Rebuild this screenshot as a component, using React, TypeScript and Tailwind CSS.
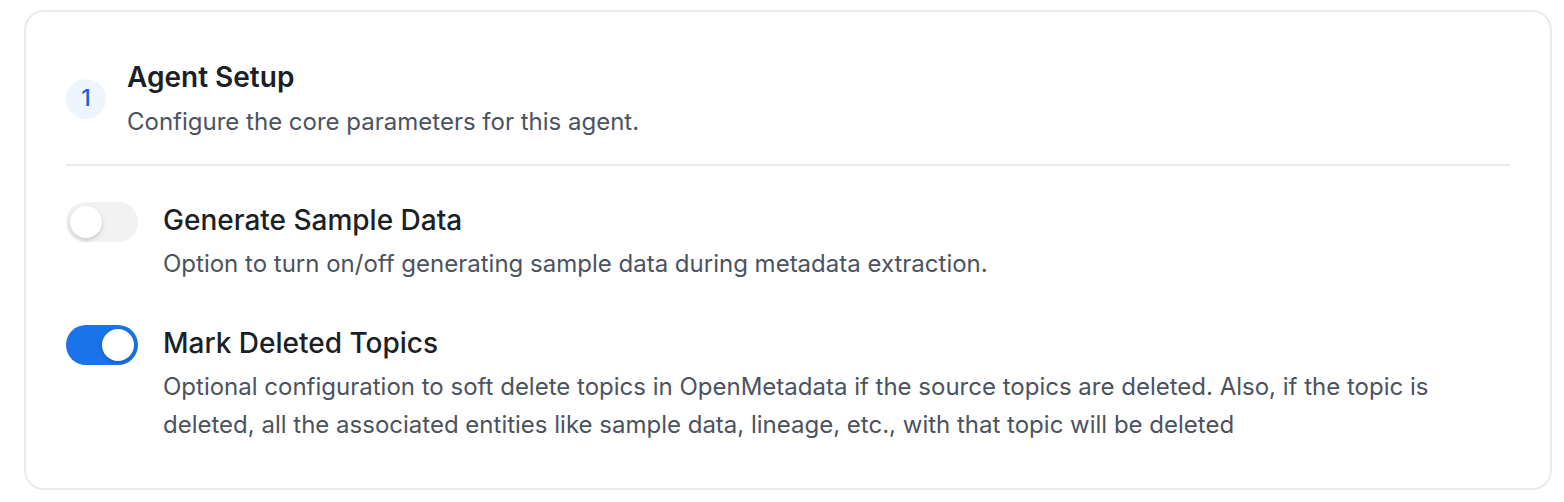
import { useState } from "react";

const FONT = { fontFamily: "Inter, 'Noto Sans', sans-serif" };

function Toggle({ on, onClick }: { on: boolean; onClick: () => void }) {
  return (
    <button
      type="button"
      onClick={onClick}
      className={
        "flex h-[40px] w-[72px] flex-none items-center rounded-full p-[4px] " +
        (on ? "justify-end bg-[#1a73e8]" : "justify-start bg-[#f2f2f2]")
      }
    >
      <span className="h-[32px] w-[32px] rounded-full bg-white shadow-[0_2px_4px_rgba(0,0,0,0.18)]" />
    </button>
  );
}

export default function App() {
  const [sample, setSample] = useState(false);
  const [mark, setMark] = useState(true);

  const rows = [
    {
      title: "Generate Sample Data",
      desc: "Option to turn on/off generating sample data during metadata extraction.",
      on: sample,
      flip: () => setSample((v) => !v),
    },
    {
      title: "Mark Deleted Topics",
      desc: "Optional configuration to soft delete topics in OpenMetadata if the source topics are deleted. Also, if the topic is deleted, all the associated entities like sample data, lineage, etc., with that topic will be deleted",
      on: mark,
      flip: () => setMark((v) => !v),
    },
  ];

  return (
    <div className="min-h-screen bg-white pl-[24px] pr-[12px] pt-[10px]" style={FONT}>
      <div className="rounded-[20px] border-2 border-[#ebebeb] bg-white px-[40px] pb-[44px] pt-[48px]">
        {/* header */}
        <div className="flex items-center gap-[21px]">
          <div className="flex h-[40px] w-[40px] flex-none items-center justify-center rounded-full bg-[#eef5fe] text-[23px] font-medium text-[#1d5fd6]">
            1
          </div>
          <div>
            <h2 className="text-[28px] font-semibold leading-[34px] text-[#1b1f27]">Agent Setup</h2>
            <p className="mt-[13px] text-[24px] leading-[30px] text-[#4b5360]">
              Configure the core parameters for this agent.
            </p>
          </div>
        </div>

        <div className="mt-[27px] h-[2px] bg-[#ebebeb]" />

        <div className="mt-[36px] flex flex-col gap-[42px]">
          {rows.map((r) => (
            <div key={r.title} className="flex gap-[25px]">
              <Toggle on={r.on} onClick={r.flip} />
              <div className="pt-[2px]">
                <div className="text-[28px] font-medium leading-[32px] text-[#1b1f27]">{r.title}</div>
                <p className="mt-[9px] text-[24px] leading-[38px] text-[#4b5360]">{r.desc}</p>
              </div>
            </div>
          ))}
        </div>
      </div>
    </div>
  );
}
